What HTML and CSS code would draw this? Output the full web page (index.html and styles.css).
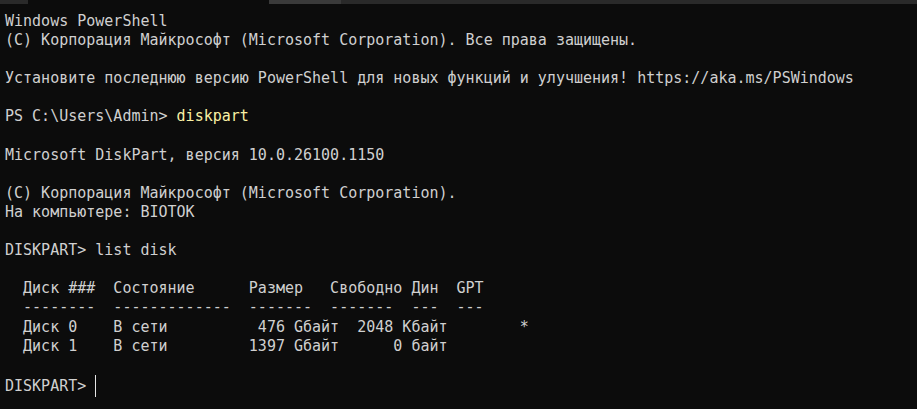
FILE: index.html
```html
<!DOCTYPE html>
<html lang="ru">
<head>
<meta charset="utf-8">
<title>Windows PowerShell</title>
<link rel="stylesheet" href="styles.css">
</head>
<body>
<div class="tabbar">
  <div class="tab-edge tab-left"></div>
  <div class="tab-gap"></div>
  <div class="tab-edge tab-right"><div class="tab-thumb"></div></div>
</div>
<pre class="console">Windows PowerShell
(C) Корпорация Майкрософт (Microsoft Corporation). Все права защищены.

Установите последнюю версию PowerShell для новых функций и улучшения! https://aka.ms/PSWindows

PS C:\Users\Admin&gt; <span class="cmd">diskpart</span>

Microsoft DiskPart, версия 10.0.26100.1150

(C) Корпорация Майкрософт (Microsoft Corporation).
На компьютере: BIOTOK

DISKPART&gt; list disk

  Диск ###  Состояние      Размер   Свободно Дин  GPT
  --------  -------------  -------  -------  ---  ---
  Диск 0    В сети          476 Gбайт  2048 Kбайт        *
  Диск 1    В сети         1397 Gбайт      0 байт

DISKPART&gt; <span class="cursor"></span></pre>
</body>
</html>
```

FILE: styles.css
```css
html, body {
  margin: 0;
  padding: 0;
  background: #0c0c0c;
  height: 100%;
  overflow: hidden;
}

.tabbar {
  display: flex;
  height: 4px;
}

.tab-edge {
  background: #2a2a2a;
}

.tab-left {
  width: 28px;
}

.tab-gap {
  width: 241px;
  background: #0c0c0c;
}

.tab-right {
  flex: 1;
  display: flex;
}

.tab-thumb {
  width: 72px;
  background: #3a3a3a;
}

.console {
  margin: 0;
  padding: 8px 5px 0 5px;
  font-family: "DejaVu Sans Mono", "Liberation Mono", monospace;
  font-size: 15px;
  line-height: 19.1px;
  color: #d0d0d0;
  white-space: pre;
}

.cmd {
  color: #f9f1a5;
}

.cursor {
  display: inline-block;
  width: 1px;
  height: 22px;
  background: #e6e6e6;
  vertical-align: -6px;
}
```
